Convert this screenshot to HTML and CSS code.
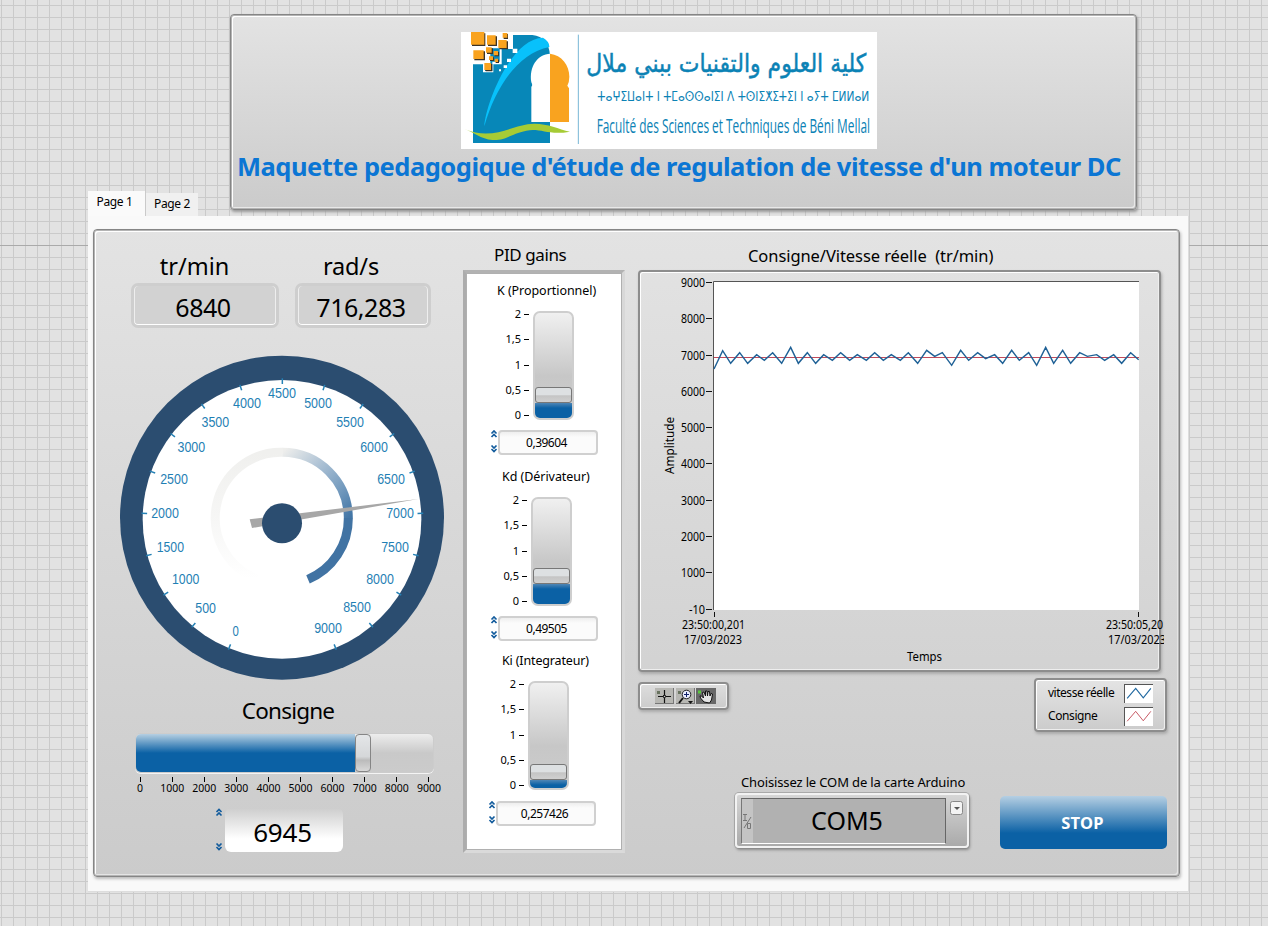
FILE: index.html
```html
<!DOCTYPE html>
<html lang="fr">
<head>
<meta charset="utf-8">
<title>Régulation de vitesse d'un moteur DC</title>
<link rel="stylesheet" href="styles.css">
</head>
<body>
<header class="banner">
  <svg class="logo" width="416" height="117" viewBox="18 21 1248 351">
    <rect x="18" y="21" width="1248" height="351" fill="#fff"/>
    <path d="M54 354V116H106V70H174V30H232Q282 36 285 92V354Z" fill="#0787b8"/>
    <path d="M88 304C90 245 165 40 264 38Q284 50 283 66C190 84 122 184 88 304Z" fill="#08c1fb"/>
    <path d="M229 291V185Q234 182 229 172C222 125 246 88 286 86V291Z" fill="#fff"/>
    <path d="M285 86C320 90 343 120 343 155Q343 170 337 182L342 190V291H285Z" fill="#f9a31f"/>
    <path d="M27 312C120 350 172 296 238 296C280 296 310 312 345 320C280 332 258 309 214 317C165 327 154 347 112 345C78 343 55 320 27 312Z" fill="#a6cb35"/>
    <path d="M50 110H90V138H112V110H134V70H160V30H174V72H140V118H115V142H84V118H50Z" fill="#fff"/>
    <g fill="#3b3328"><path d="M51 25h40v38h-40zM99 34h27v29h-27zM133 49h26v24h-26zM146 27h13v15h-13zM58 79h32v27h-32zM96 70h18v17h-18zM119 81h13v13h-13zM105 97h12v11h-12zM122 104h10v10h-10zM92 117h20v22h-20z"/></g>
    <g fill="#f9a31f"><path d="M48 21h40v38h-40zM96 31h26v28h-26zM130 45h25v24h-25zM143 24h14v14h-14zM55 76h31v26h-31zM93 67h17v16h-17zM116 78h13v13h-13zM102 94h12v11h-12zM119 101h10v10h-10zM88 114h20v21h-20z"/></g>
    <path d="M173 71h14v13h-14zM156 101h12v10h-12zM146 121h10v8h-10zM132 133h6v6h-6z" fill="#fff"/>
    <path d="M370 29V357" stroke="#77b6d5" stroke-width="3"/>
    <g fill="#0b82b5" text-anchor="middle">
      <text class="arabic" x="814" y="140" direction="rtl" textLength="840" lengthAdjust="spacingAndGlyphs">كلية العلوم والتقنيات ببني ملال</text>
      <text class="tifinagh" x="835" y="228" textLength="816" lengthAdjust="spacingAndGlyphs">ⵜⴰⵖⵉⵡⴰⵏⵜ ⵏ ⵜⵎⴰⵙⵙⴰⵏⵉⵏ ⴷ ⵜⵙⵏⵉⵅⵉⵜⵉⵏ ⵏ ⴰⵢⵜ ⵎⵍⵍⴰⵍ</text>
      <text class="faculty" x="835" y="324" textLength="820" lengthAdjust="spacingAndGlyphs">Faculté des Sciences et Techniques de Béni Mellal</text>
    </g>
  </svg>
  <h1 class="title">Maquette pedagogique d'étude de regulation de vitesse d'un moteur DC</h1>
</header>

<nav class="tabs"><span class="tab tab-active">Page 1</span><span class="tab">Page 2</span></nav>

<main class="page">
 <div class="front-panel">
  <section class="motor">
    <div class="readouts">
      <div class="readout readout-rpm"><div class="readout-label">tr/min</div><div class="readout-value">6840</div></div>
      <div class="readout readout-rad"><div class="readout-label">rad/s</div><div class="readout-value">716,283</div></div>
    </div>
    <svg class="gauge" width="345" height="345" viewBox="0 0 1035 1035">
      <defs>
        <linearGradient id="fade" x1="0" y1="0" x2="0" y2="1"><stop offset="0" stop-color="#f0f0ee"/><stop offset=".5" stop-color="#f6f6f5"/><stop offset="1" stop-color="#fff"/></linearGradient>
        <linearGradient id="rise" x1="0" y1="0" x2="1" y2="1"><stop offset="0" stop-color="#eeeeec"/><stop offset=".4" stop-color="#a9bfd3"/><stop offset=".75" stop-color="#6f97bc"/><stop offset="1" stop-color="#4376a6"/></linearGradient>
        <path id="tick" d="M517 100V117"/>
      </defs>
      <circle cx="516" cy="518" r="486" fill="#2b4d70"/>
      <circle cx="516" cy="523" r="418" fill="#fff"/>
      <g id="ticks" stroke="#2581b5" stroke-width="4.500">
        <use href="#tick" transform="rotate(-157.5 517 523)"/><use href="#tick" transform="rotate(-140 517 523)"/><use href="#tick" transform="rotate(-122.5 517 523)"/><use href="#tick" transform="rotate(-105 517 523)"/><use href="#tick" transform="rotate(-87.5 517 523)"/><use href="#tick" transform="rotate(-70 517 523)"/><use href="#tick" transform="rotate(-52.5 517 523)"/><use href="#tick" transform="rotate(-35 517 523)"/><use href="#tick" transform="rotate(-17.5 517 523)"/><use href="#tick"/><use href="#tick" transform="rotate(17.5 517 523)"/><use href="#tick" transform="rotate(35 517 523)"/><use href="#tick" transform="rotate(52.5 517 523)"/><use href="#tick" transform="rotate(70 517 523)"/><use href="#tick" transform="rotate(87.5 517 523)"/><use href="#tick" transform="rotate(105 517 523)"/><use href="#tick" transform="rotate(122.5 517 523)"/><use href="#tick" transform="rotate(140 517 523)"/><use href="#tick" transform="rotate(157.5 517 523)"/>
      </g>
      <g fill="none" stroke-width="27">
        <path d="M440 702A197 197 0 0 1 518 322" stroke="url(#fade)"/>
        <path d="M517 322A198 198 0 0 1 715 520" stroke="url(#rise)"/>
        <path d="M715 519A198 198 0 0 1 594 703" stroke="#4173a3"/>
      </g>
      <path d="M419 523L925 462L426 549Z" fill="#a7a7a7"/>
      <circle cx="516" cy="535" r="60" fill="#2b4d70"/>
      <g class="gauge-text">
        <text x="377" y="873" textLength="19" lengthAdjust="spacingAndGlyphs">0</text><text x="287" y="805" textLength="62" lengthAdjust="spacingAndGlyphs">500</text>
        <g><text x="227" y="718" textLength="82" lengthAdjust="spacingAndGlyphs">1000</text><text x="181" y="622" textLength="82" lengthAdjust="spacingAndGlyphs">1500</text><text x="165" y="520" textLength="83" lengthAdjust="spacingAndGlyphs">2000</text><text x="192" y="416" textLength="83" lengthAdjust="spacingAndGlyphs">2500</text><text x="244" y="322" textLength="83" lengthAdjust="spacingAndGlyphs">3000</text><text x="316" y="247" textLength="83" lengthAdjust="spacingAndGlyphs">3500</text><text x="411" y="190" textLength="84" lengthAdjust="spacingAndGlyphs">4000</text><text x="516" y="160" textLength="84" lengthAdjust="spacingAndGlyphs">4500</text><text x="624" y="190" textLength="83" lengthAdjust="spacingAndGlyphs">5000</text><text x="720" y="247" textLength="83" lengthAdjust="spacingAndGlyphs">5500</text><text x="792" y="322" textLength="83" lengthAdjust="spacingAndGlyphs">6000</text><text x="843" y="416" textLength="83" lengthAdjust="spacingAndGlyphs">6500</text><text x="870" y="520" textLength="83" lengthAdjust="spacingAndGlyphs">7000</text><text x="855" y="622" textLength="83" lengthAdjust="spacingAndGlyphs">7500</text><text x="810" y="718" textLength="83" lengthAdjust="spacingAndGlyphs">8000</text><text x="741" y="802" textLength="83" lengthAdjust="spacingAndGlyphs">8500</text><text x="654" y="865" textLength="83" lengthAdjust="spacingAndGlyphs">9000</text></g>
      </g>
    </svg>
    <div class="setpoint-label">Consigne</div>
    <div class="hslider"><div class="hfill" style="width:219px"></div><div class="hthumb"></div></div>
    <div class="hscale"><span>0</span><span>1000</span><span>2000</span><span>3000</span><span>4000</span><span>5000</span><span>6000</span><span>7000</span><span>8000</span><span>9000</span></div>
    <div class="setpoint">
      <svg class="steps" width="8" height="44" viewBox="0 0 8 44"><path d="M1.500 4L4 1.500L6.500 4M1.500 7.500L4 5L6.500 7.500M1.500 35.500L4 38L6.500 35.500M1.500 39L4 41.500L6.500 39"/></svg>
      <div class="setpoint-value">6945</div>
    </div>
  </section>

  <section class="pid">
    <h2 class="pid-title">PID gains</h2>
    <div class="pid-frame">
      <div class="gain">
        <div class="gain-label w-k">K (Proportionnel)</div>
        <div class="vslider"><div class="vscale"><span>2</span><span>1,5</span><span>1</span><span>0,5</span><span>0</span></div><div class="track"><div class="vthumb"></div><div class="vfill" style="height:15px"></div></div></div>
        <div class="gain-input"><svg class="steps" width="8" height="25" viewBox="0 0 8 25"><path d="M1.500 3.500L4 1L6.500 3.500M1.500 7L4 4.500L6.500 7M1.500 15.500L4 18L6.500 15.500M1.500 19L4 21.500L6.500 19"/></svg><div class="gain-value">0,39604</div></div>
      </div>
      <div class="gain gain-kd">
        <div class="gain-label w-kd">Kd (Dérivateur)</div>
        <div class="vslider"><div class="vscale"><span>2</span><span>1,5</span><span>1</span><span>0,5</span><span>0</span></div><div class="track"><div class="vthumb"></div><div class="vfill" style="height:20px"></div></div></div>
        <div class="gain-input"><svg class="steps" width="8" height="25" viewBox="0 0 8 25"><path d="M1.500 3.500L4 1L6.500 3.500M1.500 7L4 4.500L6.500 7M1.500 15.500L4 18L6.500 15.500M1.500 19L4 21.500L6.500 19"/></svg><div class="gain-value">0,49505</div></div>
      </div>
      <div class="gain gain-ki">
        <div class="gain-label w-ki">Ki (Integrateur)</div>
        <div class="vslider"><div class="vscale"><span>2</span><span>1,5</span><span>1</span><span>0,5</span><span>0</span></div><div class="track"><div class="vthumb"></div><div class="vfill" style="height:8px"></div></div></div>
        <div class="gain-input"><svg class="steps" width="8" height="25" viewBox="0 0 8 25"><path d="M1.500 3.500L4 1L6.500 3.500M1.500 7L4 4.500L6.500 7M1.500 15.500L4 18L6.500 15.500M1.500 19L4 21.500L6.500 19"/></svg><div class="gain-value">0,257426</div></div>
      </div>
    </div>
  </section>

  <section class="trend">
    <h2 class="trend-title">Consigne/Vitesse réelle&nbsp; (tr/min)</h2>
    <div class="raised chart-box">
      <svg class="chart" width="524" height="398" viewBox="640 272 524 398">
        <rect x="713" y="281" width="426" height="329" fill="#fff"/>
        <path d="M1139 281.500H713.500V610" fill="none" stroke="#555"/>
        <path d="M706 282.500h6M706 318.500h6M706 355.500h6M706 391.500h6M706 427.500h6M706 463.500h6M706 500.500h6M706 536.500h6M706 572.500h6M706 609.500h6M714.500 612v5M1138.500 612v5" stroke="#111"/>
        <path d="M714 357.500H1139" stroke="#c24a5a"/>
        <g transform="translate(635 240) scale(.33333)"><polyline fill="none" stroke="#1f6196" stroke-width="4.300" points="237,387 263,332 287,370 314,338 338,370 365,344 388,361 413,338 440,370 467,322 490,370 517,338 542,370 566,344 592,361 617,338 644,361 667,344 694,361 719,338 745,361 769,344 796,361 820,338 848,370 875,331 899,349 922,338 950,376 977,331 1001,361 1028,338 1052,356 1079,344 1103,370 1130,331 1153,361 1181,338 1205,376 1232,322 1256,370 1283,331 1307,370 1334,338 1357,349 1385,344 1409,361 1436,344 1460,370 1487,338 1511,359"/></g>
        <g class="axis" text-anchor="end"><text x="705" y="287" textLength="24" lengthAdjust="spacingAndGlyphs">9000</text><text x="705" y="323" textLength="24" lengthAdjust="spacingAndGlyphs">8000</text><text x="705" y="360" textLength="24" lengthAdjust="spacingAndGlyphs">7000</text><text x="705" y="396" textLength="24" lengthAdjust="spacingAndGlyphs">6000</text><text x="705" y="432" textLength="24" lengthAdjust="spacingAndGlyphs">5000</text><text x="705" y="468" textLength="24" lengthAdjust="spacingAndGlyphs">4000</text><text x="705" y="505" textLength="24" lengthAdjust="spacingAndGlyphs">3000</text><text x="705" y="541" textLength="24" lengthAdjust="spacingAndGlyphs">2000</text><text x="705" y="577" textLength="24" lengthAdjust="spacingAndGlyphs">1000</text><text x="705" y="614" textLength="16" lengthAdjust="spacingAndGlyphs">-10</text></g>
        <g class="axis"><text x="682" y="629" textLength="63" lengthAdjust="spacingAndGlyphs">23:50:00,201</text><text x="684" y="644" textLength="58" lengthAdjust="spacingAndGlyphs">17/03/2023</text><text x="1106" y="629" textLength="57" lengthAdjust="spacingAndGlyphs">23:50:05,20</text><text x="1108" y="644" textLength="58" lengthAdjust="spacingAndGlyphs">17/03/2023</text><text x="907" y="661" textLength="35" lengthAdjust="spacingAndGlyphs">Temps</text><text transform="translate(674 474) rotate(-90)" textLength="57" lengthAdjust="spacingAndGlyphs">Amplitude</text></g>
      </svg>
    </div>
    <div class="tools-row">
      <div class="raised palette">
        <svg width="62" height="17" viewBox="0 0 62 17">
          <rect width="19" height="16" fill="#b7b7b3"/><path d="M18.500 0V16M0 15.500H19" stroke="#777"/>
          <rect x="21" width="19" height="16" fill="#b7b7b3"/><path d="M39.500 0V16M21 15.500H40" stroke="#777"/>
          <rect x="41" width="20" height="16" fill="#686868"/>
          <path d="M2 3h3v3h-3zM23 3h3v3h-3z" fill="#68735f"/>
          <path d="M9.500 2V15M3 8.500H16" stroke="#111" stroke-width="1.200"/><rect x="8.500" y="7.500" width="2" height="2" fill="#ccc" stroke="#111" stroke-width=".7"/>
          <path d="M28 10L24 15" stroke="#111" stroke-width="2"/><circle cx="31.500" cy="6.500" r="4.300" fill="#e9edff" stroke="#222"/><path d="M29 6.500H34M31.500 4V9" stroke="#10206a"/><path d="M33 13h5l-2.500 3z" fill="#111"/>
          <path d="M49 14L45.500 10L45 8L46.500 8L48.500 10L47.500 4.500L49 4L50.500 8L50.500 3L52 3L52.500 8L53 3.500L54.500 3.500L55 8L56 5.500L57.500 6L56.500 12L54.500 15Z" fill="#e4e4e4" stroke="#111"/><path d="M43 2.500h3v3h-3z" fill="#59c83d"/>
        </svg>
      </div>
      <div class="raised legend">
        <div class="legend-row"><span class="legend-a">vitesse réelle</span><svg class="swatch" width="29" height="19" viewBox="0 0 29 19"><path d="M2 14L11 3.500L19 13.500L27 3.500" fill="none" stroke="#2068a0" stroke-width="1.200"/></svg></div>
        <div class="legend-row"><span class="legend-b">Consigne</span><svg class="swatch" width="29" height="19" viewBox="0 0 29 19"><path d="M2 14L11 3.500L19 13.500L27 3.500" fill="none" stroke="#c4505c"/></svg></div>
      </div>
    </div>
    <div class="bottom-row">
      <div class="port">
        <div class="port-label">Choisissez le COM de la carte Arduino</div>
        <div class="port-box">
          <div class="port-field"><svg class="io" width="11" height="42" viewBox="0 0 11 42"><path d="M1 15.500H5M3 15.500V21.500M1 21.500H5M9 18L2 29M5.500 24.500h3v5h-3z"/></svg><div class="port-value">COM5</div></div>
          <div class="port-drop"><svg width="13" height="14" viewBox="0 0 13 14"><rect x=".5" y=".5" width="12" height="13" rx="2" fill="#f3f3f3" stroke="#888"/><path d="M4 6h6L7 9z" fill="#555"/></svg></div>
        </div>
      </div>
      <button class="stop">STOP</button>
    </div>
  </section>
 </div>
</main>
</body>
</html>
```

FILE: styles.css
```css
* { box-sizing: border-box; }
body {
  margin: 0; width: 1268px; height: 926px; overflow: hidden; color: #000;
  font-family: "Noto Sans", "Open Sans", sans-serif;
  background:
    linear-gradient(#aaa, #aaa) 0 245px / 100% 1px no-repeat,
    linear-gradient(#cacaca 1px, transparent 1px) 0 5px / 12px 12px,
    linear-gradient(90deg, #cacaca 1px, transparent 1px) 1px 0 / 12px 12px,
    #e2e2e2;
  display: flow-root;
}
h1, h2 { margin: 0; }
svg { display: block; flex: none; }

/* banner */
.banner {
  width: 907px; height: 196px; margin: 14px 0 0 230px; padding-top: 17px;
  border: 1px solid #858585; border-radius: 4px;
  background: linear-gradient(#e3e3e3, #cbcbcb);
  box-shadow: inset 0 0 0 1px #b4b4b4, inset 2px 2px #fff, inset -2px -2px #e8e8e8, 1px 2px 3px #999;
  display: flex; flex-direction: column;
}
.logo { margin-left: 230px; overflow: visible; }
.arabic { font: 76px "DejaVu Sans", sans-serif; stroke: #0b82b5; stroke-width: 1.5px; }
.tifinagh { font: 40px "DejaVu Sans", sans-serif; }
.faculty { font: 61px "Open Sans", sans-serif; }
.title { font-size: 25.5px; line-height: 34px; color: #0b76d4; white-space: nowrap; margin-left: 6px; letter-spacing: -.48px; }

/* tabs */
.tabs { display: flex; margin: -19px 0 0 88px; height: 25px; align-items: flex-end; width: 111px; gap: 1px; }
.tab { width: 52px; height: 23px; background: #f0f0f0; font-size: 12px; line-height: 22px; text-align: center; letter-spacing: -.35px; }
.tab-active { width: 57px; height: 25px; background: #fafafa; padding-right: 4px; }
.page { margin-left: 88px; width: 1101px; height: 676px; background: #f9f9f9; border-right: 1px solid #ddd; border-bottom: 1px solid #ddd; padding: 13px 0 0 5px; }
.front-panel {
  width: 1087px; height: 648px; padding: 1px; border: 1px solid #858585; border-radius: 4px;
  background: linear-gradient(#e3e3e3, #cbcbcb);
  box-shadow: inset 0 0 0 1px #b4b4b4, inset 2px 2px #fff, inset -2px -2px #e4e4e4, 1px 2px 3px #bbb;
  display: grid; grid-template-columns: 368px 175px 1fr;
}

/* speed readouts and gauge */
.motor { padding-top: 20px; }
.readouts { display: flex; gap: 16px; padding-left: 36px; }
.readout-rpm { width: 148px; }
.readout-rad { width: 136px; }
.readout-label { height: 32px; line-height: 30px; font-size: 23.5px; text-align: center; padding-right: 21px; }
.readout-rad .readout-label { padding-right: 24px; letter-spacing: -.2px; }
.readout-value {
  height: 45px; line-height: 43px; border: 3px solid #cecece; border-radius: 7px; background: #d2d2d2;
  box-shadow: inset 0 -1px #fff, inset 1px 0 #eee, inset -1px 0 #eee; font-size: 25px; text-align: center; letter-spacing: -.45px; padding-right: 4px;
}
.gauge { margin: 17px 0 0 15px; }
.gauge-text { font: 43px "Liberation Sans", sans-serif; fill: #1f7fb4; text-anchor: middle; }

/* setpoint slider */
.setpoint-label { margin-top: 5px; height: 32px; line-height: 31px; font-size: 22.5px; text-align: center; padding-left: 18px; letter-spacing: -.8px; }
.hslider {
  display: flex; margin: 6px 0 0 40px; width: 299px; height: 40px; border: 1px solid #ccc; border-radius: 6px;
  background: linear-gradient(#ededed, #c9c9c9 50%, #cbcbcb); box-shadow: 0 1px #f4f4f4;
}
.hfill { border-radius: 5px 0 0 5px; background: linear-gradient(#b5cfe2, #0b61a5 50%); }
.hthumb { width: 16px; height: 38px; border: 1.5px solid #858585; border-radius: 4px; background: linear-gradient(#e4e6e8, #d5d7d9 60%, #bbb 70%, #d8d8d8); }
.hscale { display: flex; width: 321px; margin: 4px 0 0 29px; }
.hscale span { flex: 1; font-size: 10.5px; line-height: 13px; text-align: center; }
.hscale span::before { content: ""; display: block; width: 1px; height: 5px; background: #000; margin: 0 auto; }
.setpoint { display: flex; margin: 13px 0 0 120px; gap: 2px; align-items: flex-start; }
.steps path { fill: none; stroke: #125b9c; stroke-width: 1.7; }
.setpoint-value { width: 118px; height: 44px; border-radius: 6px; background: linear-gradient(#cdcdcd, #fff 70%); font-size: 26px; line-height: 48px; text-align: center; letter-spacing: -.2px; padding-right: 3px; }

/* PID gains */
.pid { padding-top: 11px; }
.pid-title { height: 28px; padding-left: 31px; font-size: 17px; line-height: 25px; font-weight: 400; letter-spacing: -.4px; }
.pid-frame {
  width: 162px; height: 583px; background: #fff; border: 3px solid; border-color: #b2b2b2 #d8d8d8 #dadada #acacac;
  box-shadow: inset 0 0 0 1px #b0b0b0; padding: 7px 0 0 24px;
}
.gain { width: 109px; }
.gain-label { height: 20px; line-height: 21px; font-size: 12.5px; white-space: nowrap; letter-spacing: -.05px; }
.w-k { padding-left: 7px; }
.w-kd { padding-left: 12px; }
.w-ki { padding-left: 12px; letter-spacing: -.15px; }
.vslider { display: flex; height: 113px; margin: 8px 0 0 11px; gap: 4px; }
.vscale { width: 28px; display: flex; flex-direction: column; justify-content: space-between; font-size: 11px; line-height: 12px; text-align: right; }
.vscale span { display: flex; justify-content: flex-end; align-items: center; gap: 3px; }
.vscale span::after { content: ""; width: 5px; height: 1px; background: #000; margin-top: 1px; }
.track {
  margin-top: 3px; width: 41px; height: 109px; border: 2px solid #cecece; border-radius: 7px; overflow: hidden;
  background: linear-gradient(#f0f0f0, #c7c7c7 60%, #cdcdcd);
  display: flex; flex-direction: column; justify-content: flex-end;
}
.vthumb { height: 16px; border: 1px solid #777; border-radius: 3px; background: linear-gradient(#dde0e2 50%, #c4c4c4 55%, #d0d0d0); flex: none; }
.vfill { background: linear-gradient(#4f86b5, #0b61a5 5px); flex: none; }
.gain-input { display: flex; margin-top: 9px; }
.gain-value { width: 100px; height: 25px; border: 2px solid #d0d0d0; border-radius: 4px; background: linear-gradient(#eee, #fbfbfb 5px); font-size: 12px; line-height: 21px; text-align: center; letter-spacing: -.5px; padding-right: 3px; }
.gain-kd { margin-top: 11px; }
.gain-ki { margin-top: 9px; }
.gain-kd .vslider { margin-left: 9px; }
.gain-ki .vslider { margin-left: 6px; }
.gain-ki .gain-input { margin: 10px 0 0 -2px; }

/* trend chart */
.trend { padding-top: 12px; }
.trend-title { height: 27px; line-height: 25px; font-size: 16.5px; font-weight: 400; padding-left: 110px; letter-spacing: -.07px; white-space: nowrap; }
.raised { border: 2px solid #8d8d8d; border-radius: 4px; box-shadow: inset 1px 1px #fff, inset -1px -1px #eee, 1px 2px 3px #aaa; }
.chart-box { width: 523px; height: 402px; }
.axis { font-size: 12px; }
.tools-row { display: flex; justify-content: space-between; align-items: flex-start; width: 529px; margin-top: 6px; }
.palette { margin-top: 4px; width: 91px; height: 28px; padding: 4px 0 0 15px; background: linear-gradient(#ddd, #ccc); }
.legend { width: 133px; height: 54px; padding: 2px 12px 0 12px; background: linear-gradient(#e4e4e4, #ccc); font-size: 12px; }
.legend-row { display: flex; height: 23px; align-items: center; justify-content: space-between; }
.legend-row span { margin-top: -2px; }
.legend-a { letter-spacing: -.48px; }
.legend-b { letter-spacing: -.4px; }
.swatch { background: #fff; border: solid #555; border-width: 1px 0 0 1px; }

/* serial port and stop */
.bottom-row { display: flex; align-items: flex-start; margin: 40px 0 0 97px; width: 432px; justify-content: space-between; }
.port { width: 234px; }
.port-label { height: 21px; line-height: 20px; font-size: 13px; padding-left: 6px; white-space: nowrap; letter-spacing: -.14px; }
.port-box { display: flex; height: 55px; border: 2px solid #f2f2f2; border-radius: 4px; background: linear-gradient(#d6d6d6, #aaa); box-shadow: 1px 2px 3px #888, 0 0 0 1px #aaa; padding: 3px 0 0 4px; gap: 4px; }
.port-field { display: flex; width: 205px; height: 46px; border: 1px solid; border-color: #666 #666 #fff #777; background: #c4c4c4; }
.io path { fill: none; stroke: #777; }
.port-value { flex: 1; background: #b1b1b1; font-size: 25px; line-height: 43px; text-align: center; letter-spacing: 0; padding-right: 4px; }
.port-drop { padding-top: 3px; }
.stop { margin-top: 24px; padding: 0 2px 0 0; width: 167px; height: 53px; border: 0; border-radius: 5px; background: linear-gradient(#b5cfe3, #0b61a5 70%); color: #fff; font: 700 16.5px "Noto Sans", sans-serif; letter-spacing: .2px; }
```
